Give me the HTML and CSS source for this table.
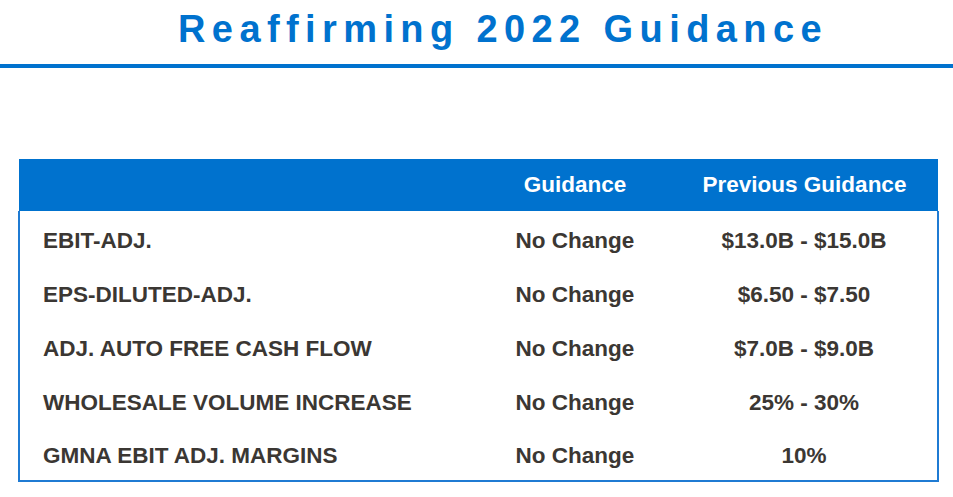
FILE: index.html
```
<!DOCTYPE html>
<html>
<head>
<meta charset="utf-8">
<link rel="stylesheet" href="styles.css">
</head>
<body>
<header class="top">
  <h1 class="title">Reaffirming 2022 Guidance</h1>
</header>
<table class="guide">
  <thead>
    <tr>
      <th class="c1"></th>
      <th class="c2">Guidance</th>
      <th class="c3">Previous Guidance</th>
    </tr>
  </thead>
  <tbody>
    <tr><td class="c1">EBIT-ADJ.</td><td class="c2">No Change</td><td class="c3">$13.0B - $15.0B</td></tr>
    <tr><td class="c1">EPS-DILUTED-ADJ.</td><td class="c2">No Change</td><td class="c3">$6.50 - $7.50</td></tr>
    <tr><td class="c1">ADJ. AUTO FREE CASH FLOW</td><td class="c2">No Change</td><td class="c3">$7.0B - $9.0B</td></tr>
    <tr><td class="c1">WHOLESALE VOLUME INCREASE</td><td class="c2">No Change</td><td class="c3">25% - 30%</td></tr>
    <tr><td class="c1">GMNA EBIT ADJ. MARGINS</td><td class="c2">No Change</td><td class="c3">10%</td></tr>
  </tbody>
</table>
</body>
</html>
```
FILE: styles.css
```
html, body {
  margin: 0;
  padding: 0;
  background: #ffffff;
}
body {
  font-family: "Liberation Sans", Arial, sans-serif;
  width: 953px;
  height: 497px;
  overflow: hidden;
}
.top {
  box-sizing: border-box;
  height: 68px;
  border-bottom: 4px solid #0072ce;
  padding-top: 8px;
}
.title {
  margin: 0;
  padding-left: 53px;
  text-align: center;
  color: #0072ce;
  font-size: 38px;
  font-weight: 700;
  letter-spacing: 6.4px;
  line-height: normal;
}
.guide {
  margin: 91px 0 0 18px;
  width: 921px;
  border-collapse: collapse;
  table-layout: fixed;
  font-size: 22.5px;
  font-weight: 700;
  color: #3b3733;
}
.guide thead th {
  background: #0072ce;
  color: #ffffff;
  height: 52px;
  padding: 0;
  font-weight: 700;
  vertical-align: middle;
}
.guide tbody {
  border-left: 2px solid #1f7bd3;
  border-right: 2px solid #1f7bd3;
  border-bottom: 2px solid #1f7bd3;
}
.guide td {
  box-sizing: border-box;
  height: 54px;
  padding: 5px 0 0 0;
  vertical-align: middle;
  white-space: nowrap;
}
.c1 {
  width: 460px;
  text-align: left;
}
td.c1 {
  padding-left: 23px;
}
.c2 {
  width: 192px;
  text-align: center;
}
.c3 {
  text-align: center;
}
```
